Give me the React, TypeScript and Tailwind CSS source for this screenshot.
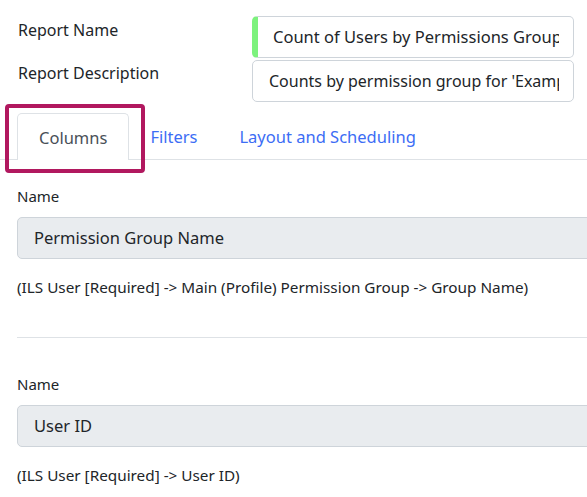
import React from 'react'

const font = { fontFamily: '"Noto Sans", "Open Sans", sans-serif' }

function ColumnField({ value, path }: { value: string, path: string }) {
  return (
    <div className="flex flex-col">
      <div className="h-[20px] text-[15px] leading-[20px] text-[#212529]">Name</div>
      <div className="mt-[11px] flex h-[42px] w-[600px] items-center rounded-[5px] border border-[#ced4da] bg-[#e9ecef] pl-[16px] text-[16.5px] text-[#212529]">
        {value}
      </div>
      <div className="mt-[18px] h-[20px] whitespace-nowrap text-[15.3px] leading-[20px] text-[#212529]">{path}</div>
    </div>
  )
}

export default function App() {
  return (
    <div className="relative h-[497px] w-[587px] overflow-hidden bg-white" style={font}>
      {/* report header */}
      <div className="flex pt-[16px]">
        <div className="flex w-[252px] flex-col pl-[18px] text-[16px] text-[#212529]">
          <div className="flex h-[28px] items-center">Report Name</div>
          <div className="mt-[15px] flex h-[28px] items-center">Report Description</div>
        </div>
        <div className="flex w-[322px] flex-col gap-[2px]">
          <div className="flex h-[42px] items-center overflow-hidden whitespace-nowrap rounded-[5px] border border-l-[6px] border-[#ced4da] border-l-[#7df27d] pl-[15px] pr-[14px] text-[16.5px] text-[#212529]">
            <span className="overflow-hidden">Count of Users by Permissions Group</span>
          </div>
          <div className="flex h-[42px] items-center overflow-hidden whitespace-nowrap rounded-[5px] border border-[#ced4da] pl-[16px] pr-[14px] text-[16px] text-[#212529]">
            <span className="overflow-hidden">Counts by permission group for 'Example'</span>
          </div>
        </div>
      </div>

      {/* tabs */}
      <div className="mt-[11px] flex h-[47px] border-b border-[#dee2e6] pl-[17px] text-[16.5px]">
        <div className="mb-[-1px] flex items-center rounded-t-[5px] border border-b-0 border-[#dee2e6] bg-white px-[21px] pt-[3px] text-[#495057]">
          Columns
        </div>
        <div className="flex items-center px-[21px] pt-[3px] text-[#3c6df5]">Filters</div>
        <div className="flex items-center px-[21px] pt-[3px] text-[#3c6df5]">Layout and Scheduling</div>
      </div>
      <div className="absolute left-[5px] top-[104px] h-[69px] w-[140px] rounded-[4px] border-[4px] border-[#b1185f]" />

      {/* columns */}
      <div className="pl-[17px] pt-[26px]">
        <ColumnField
          value="Permission Group Name"
          path="(ILS User [Required] -> Main (Profile) Permission Group -> Group Name)"
        />
        <div className="mt-[40px] border-t border-[#dee2e6]" />
        <div className="pt-[36px]">
          <ColumnField value="User ID" path="(ILS User [Required] -> User ID)" />
        </div>
      </div>
    </div>
  )
}
